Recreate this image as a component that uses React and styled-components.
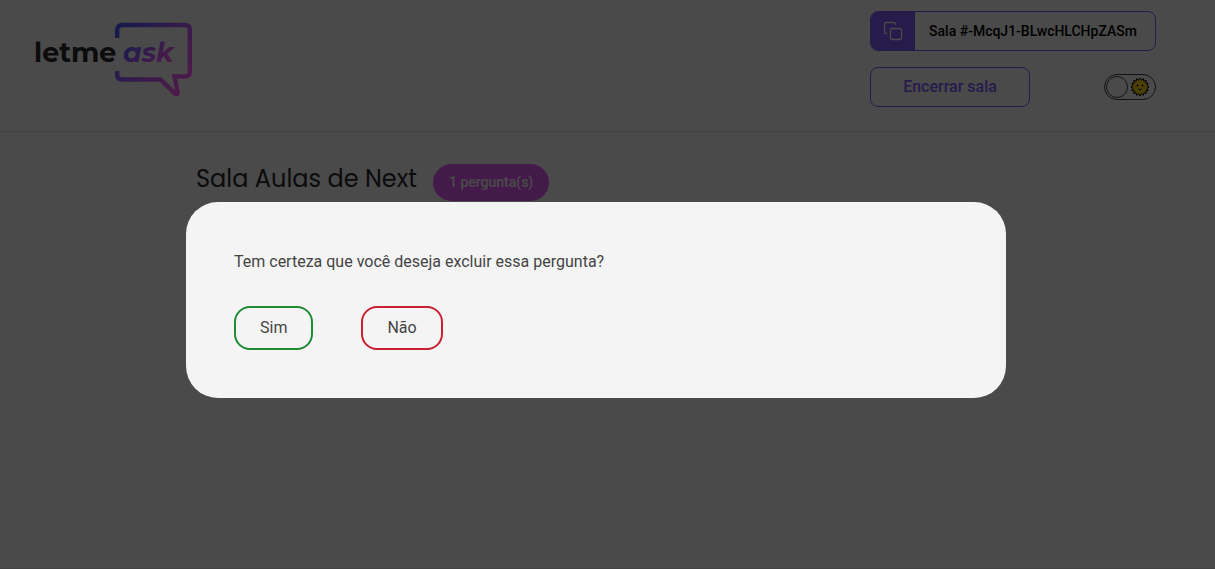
import React, { useState } from "react";
import styled, { createGlobalStyle } from "styled-components";

const GlobalStyle = createGlobalStyle`
  * { box-sizing: border-box; margin: 0; padding: 0; }
  body { background: #f8f8f8; color: #29292e; }
  body, input, button { font: 400 16px Roboto, sans-serif; }
  button { cursor: pointer; }
`;

const Page = styled.div`
  min-height: 100vh;
  padding-right: 23px;
  box-shadow: inset 0 -1px 0 #e2e2e2;
`;

const Header = styled.header`
  height: 132px;
  margin-right: -23px;
  padding: 11px 23px 0 0;
  border-bottom: 1px solid #e2e2e2;
`;

const HeaderContent = styled.div`
  max-width: 1120px;
  margin: 0 auto;
  display: flex;
  justify-content: space-between;
  align-items: flex-start;
`;

const LogoMark = styled.svg`
  display: block;
  margin: 11px 0 0 -2px;
`;

const Actions = styled.div`
  width: 286px;
  display: grid;
  gap: 16px;
`;

const ActionRow = styled.div`
  display: flex;
  justify-content: space-between;
  align-items: center;
`;

const RoomCode = styled.button`
  height: 40px;
  display: flex;
  border: 1px solid #835afd;
  border-radius: 8px;
  overflow: hidden;
  background: transparent;
`;

const CodeIcon = styled.span`
  width: 44px;
  height: 100%;
  display: grid;
  place-items: center;
  background: #835afd;
`;

const CodeText = styled.span`
  flex: 1;
  align-self: center;
  padding: 0 16px 0 12px;
  color: #000;
  font-size: 14px;
  font-weight: 500;
  white-space: nowrap;
`;

const EndRoom = styled.button`
  width: 160px;
  height: 40px;
  padding-bottom: 2px;
  border: 1px solid #835afd;
  border-radius: 8px;
  background: transparent;
  color: #835afd;
  font-weight: 500;
`;

const Toggle = styled.label`
  width: 52px;
  height: 26px;
  padding: 0 5px 0 1px;
  display: flex;
  align-items: center;
  justify-content: space-between;
  border: 1px solid #444;
  border-radius: 13px;
  cursor: pointer;
`;

const ToggleInput = styled.input`
  appearance: none;
  width: 22px;
  height: 22px;
  border: 1px solid #444;
  border-radius: 50%;
`;

const Main = styled.main`
  max-width: 800px;
  margin: 0 auto;
  padding-top: 32px;
`;

const RoomTitle = styled.div`
  display: flex;
  align-items: flex-start;
`;

const Title = styled.h1`
  font: 400 24px/30px Poppins, Inter, sans-serif;
  color: #29292e;
`;

const Count = styled.span`
  margin-left: 16px;
  padding: 8px 16px;
  border-radius: 20px;
  background: #e559f9;
  color: #f8f8f8;
  font-size: 14px;
  font-weight: 500;
  line-height: 21px;
`;

const Overlay = styled.div`
  position: fixed;
  inset: 0;
  display: flex;
  align-items: center;
  justify-content: center;
  padding: 31px 23px 0 0;
  background: rgba(0, 0, 0, 0.7);
`;

const Dialog = styled.div`
  width: 100%;
  max-width: 820px;
  padding: 48px;
  border-radius: 32px;
  background: #f4f4f4;
  color: #444;
`;

const Question = styled.p`
  line-height: 24px;
`;

const Choices = styled.div`
  display: flex;
  gap: 48px;
  margin-top: 32px;
`;

const Choice = styled.button`
  height: 44px;
  padding: 0 24px 2px;
  border: 2px solid ${({ $color }) => $color};
  border-radius: 16px;
  background: transparent;
  color: #444;
`;

const LogoText = styled.text`
  font: ${({ $italic }) => ($italic ? "italic" : "normal")} 700 27px Montserrat, Inter, sans-serif;
`;

function Logo() {
  return (
    <LogoMark width="160" height="76" viewBox="0 0 160 76" role="img" aria-label="letme ask">
      <defs>
        <linearGradient id="bubble" gradientUnits="userSpaceOnUse" x1="81" y1="8" x2="146" y2="62">
          <stop offset="0" stopColor="#485bff" />
          <stop offset="1" stopColor="#ff59f8" />
        </linearGradient>
        <linearGradient id="ask" gradientUnits="userSpaceOnUse" x1="95" y1="14" x2="125" y2="48">
          <stop offset="0" stopColor="#485bff" />
          <stop offset="1" stopColor="#ff59f8" />
        </linearGradient>
      </defs>
      <path
        d="M83.200 16V8Q83.200 3 88.200 3H150.800Q155.800 3 155.800 8V49.500Q155.800 54.500 150.800 54.500H140.500L143.700 70.500Q143.500 73 141 71.600L126.500 57.500H88.200Q83.200 57.500 83.200 52.500V49"
        fill="none" stroke="url(#bubble)" strokeWidth="4.400"
      />
      <LogoText x="0" y="40" fill="#29292e">letme</LogoText>
      <LogoText $italic x="89" y="40" fill="url(#ask)">ask</LogoText>
    </LogoMark>
  );
}

function CopyIcon() {
  return (
    <svg width="20" height="20" viewBox="0 0 20 20" fill="none" stroke="#f8f8f8" strokeWidth="1.300" strokeLinejoin="round" strokeLinecap="round" aria-hidden="true">
      <rect x="7.500" y="7.500" width="11" height="11" rx="1.500" />
      <path d="M3.500 12.500H3Q1.500 12.500 1.500 11V3Q1.500 1.500 3 1.500H11Q12.500 1.500 12.500 3V3.500" />
    </svg>
  );
}

function SunIcon() {
  const points = Array.from({ length: 32 }, (_, i) => {
    const r = i % 2 ? 7 : 9;
    const a = (i * Math.PI) / 16;
    return `${10 + r * Math.cos(a)},${10 + r * Math.sin(a)}`;
  }).join(" ");
  return (
    <svg width="20" height="20" viewBox="0 0 20 20" aria-hidden="true">
      <polygon points={points} fill="#ffd000" stroke="#000" strokeWidth="1" />
      <circle cx="10" cy="10" r="5.500" fill="#ffd91a" />
      <circle cx="7.500" cy="8.500" r=".9" />
      <circle cx="12.500" cy="8.500" r=".9" />
      <path d="M8 12Q10 13.500 12 12" fill="none" stroke="#000" strokeWidth=".9" />
    </svg>
  );
}

export default function App() {
  const [open, setOpen] = useState(true);
  const close = () => setOpen(false);
  return (
    <>
      <GlobalStyle />
      <Page>
        <Header>
          <HeaderContent>
            <Logo />
            <Actions>
              <RoomCode type="button">
                <CodeIcon><CopyIcon /></CodeIcon>
                <CodeText>Sala #-McqJ1-BLwcHLCHpZASm</CodeText>
              </RoomCode>
              <ActionRow>
                <EndRoom type="button">Encerrar sala</EndRoom>
                <Toggle>
                  <ToggleInput type="checkbox" aria-label="Tema" />
                  <SunIcon />
                </Toggle>
              </ActionRow>
            </Actions>
          </HeaderContent>
        </Header>
        <Main>
          <RoomTitle>
            <Title>Sala Aulas de Next</Title>
            <Count>1 pergunta(s)</Count>
          </RoomTitle>
        </Main>
      </Page>
      {open && (
        <Overlay>
          <Dialog role="dialog" aria-modal="true" aria-labelledby="question">
            <Question id="question">Tem certeza que você deseja excluir essa pergunta?</Question>
            <Choices>
              <Choice type="button" $color="#1f8b34" onClick={close}>Sim</Choice>
              <Choice type="button" $color="#c9202f" onClick={close}>Não</Choice>
            </Choices>
          </Dialog>
        </Overlay>
      )}
    </>
  );
}
